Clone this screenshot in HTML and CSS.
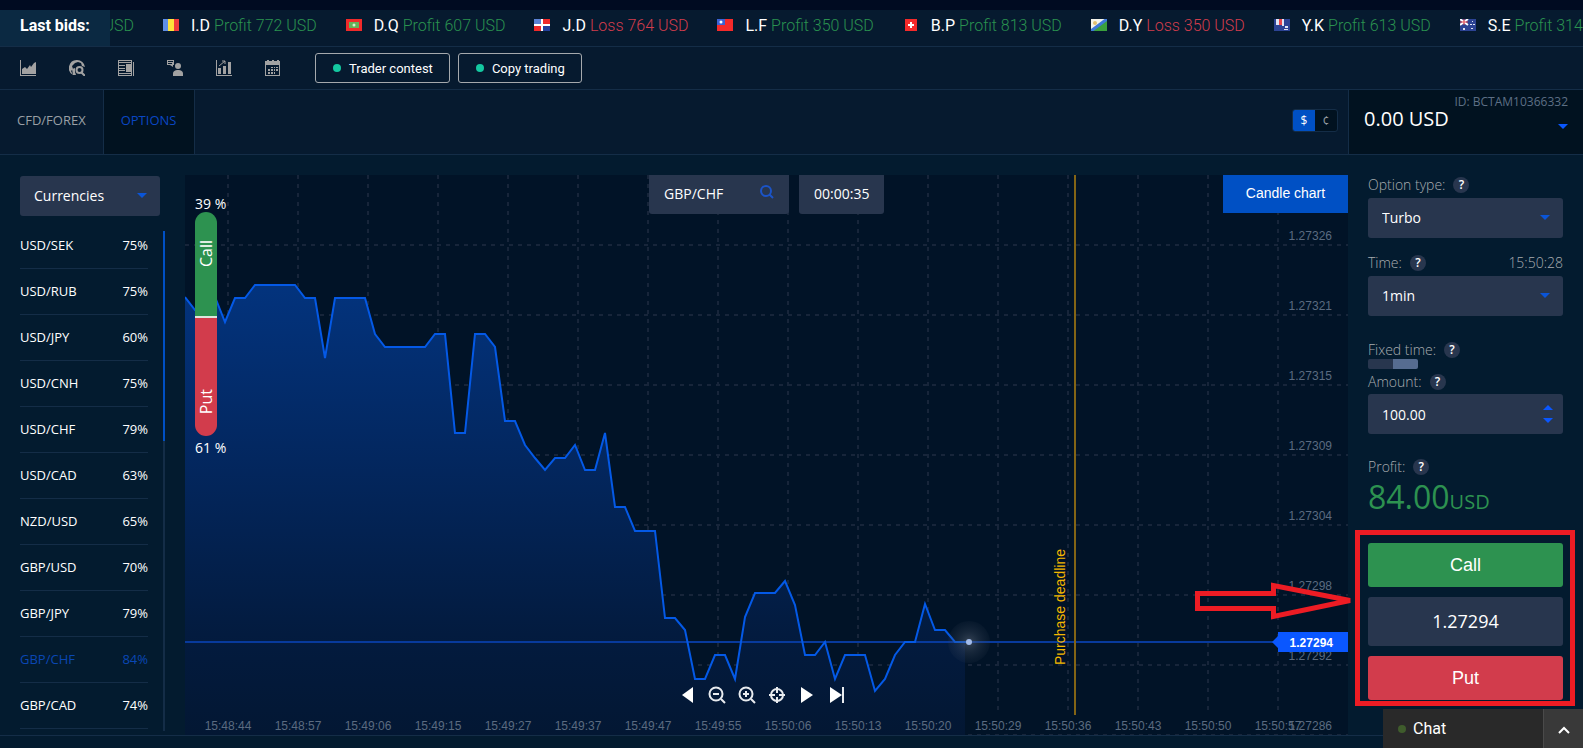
FILE: index.html
```html
<!DOCTYPE html>
<html lang="en">
<head>
<meta charset="utf-8">
<title>Options trading</title>
<link rel="stylesheet" href="styles.css">
</head>
<body>
<div class="page">
  <header>
    <div class="ticker">
      <strong class="ticker-title">Last bids:</strong>
      <ul class="ticker-list">
        <li class="bid bid-cut"><span class="profit">USD</span></li>
        <li class="bid"><svg class="flag" viewBox="0 0 16 12"><path fill="#5f8fe8" d="M0 0h5v12H0z"/><path fill="#ffe23a" d="M5 0h6v12H5z"/><path fill="#f03a3c" d="M11 0h5v12h-5z"/></svg><span>I.D <span class="profit">Profit 772 USD</span></span></li>
        <li class="bid"><svg class="flag" viewBox="0 0 16 12"><path fill="#f02a2a" d="M0 0h16v12H0z"/><path fill="#63b359" d="M3 3h10v6H3z"/><circle cx="8" cy="6" r="1.500" fill="#d5f0d0"/></svg><span>D.Q <span class="profit">Profit 607 USD</span></span></li>
        <li class="bid"><svg class="flag" viewBox="0 0 16 12"><path fill="#fff" d="M0 0h16v12H0z"/><path fill="#5b82d4" d="M0 0h7v5H0z"/><path fill="#24409c" d="M9 7h7v5H9z"/><path fill="#f02a2a" d="M9 0h7v5H9zM0 7h7v5H0z"/></svg><span>J.D <span class="loss">Loss 764 USD</span></span></li>
        <li class="bid"><svg class="flag" viewBox="0 0 16 12"><path fill="#f42a2a" d="M0 0h16v12H0z"/><path fill="#3b62d4" d="M0 0h8v6H0z"/><circle cx="4" cy="3" r="1.500" fill="#fff"/></svg><span>L.F <span class="profit">Profit 350 USD</span></span></li>
        <li class="bid"><svg class="flag" viewBox="0 0 16 12"><path fill="#f42a2a" d="M2 0h12v12H2z"/><path fill="#fff" d="M7 3h2v2h2v2H9v2H7V7H5V5h2z"/></svg><span>B.P <span class="profit">Profit 813 USD</span></span></li>
        <li class="bid"><svg class="flag" viewBox="0 0 16 12"><path fill="#f4f4ea" d="M0 0h16L0 12z"/><path fill="#3aa03c" d="M16 0v12H0z"/><path stroke="#3d78d8" stroke-width="3" d="M0 12L16 0"/><circle cx="4" cy="4" r="2" fill="#e0c070"/></svg><span>D.Y <span class="loss">Loss 350 USD</span></span></li>
        <li class="bid"><svg class="flag" viewBox="0 0 16 12"><path fill="#2c4394" d="M0 0h16v12H0z"/><path fill="#dfe4f4" d="M2 0h3v6H2zM8 0h2v7H8zM11 7h3v2h-3zM10 10h4v1h-4z"/><path fill="#e8464c" d="M5 0h3v6H5z"/></svg><span>Y.K <span class="profit">Profit 613 USD</span></span></li>
        <li class="bid"><svg class="flag" viewBox="0 0 16 12"><path fill="#2c4394" d="M0 0h16v12H0z"/><path stroke="#fff" stroke-width="2" d="M0 0l8 6M8 0L0 6"/><path stroke="#e8464c" d="M0 3h8M4 0v6"/><path fill="#dfe4f4" d="M3 9h2v2H3zM12 2h1v1h-1zM10 5h2v1h-2zM13 5h2v1h-2zM11 9h2v1h-2z"/></svg><span>S.E <span class="profit">Profit 314 USD</span></span></li>
      </ul>
    </div>

    <nav class="toolbar">
      <div class="tools">
        <a href="#" aria-label="Chart"><svg class="tool" viewBox="0 0 16 16"><path d="M0 0h1v15h15v1H0z"/><path d="M2 14V9l3-2 2 2 3-4 1 2 3-4 2-1v12z"/></svg></a>
        <a href="#" aria-label="World search"><svg class="tool" viewBox="0 0 16 16"><path d="M8 0a8 8 0 0 0-4 15L2 11l2-2-1-3 3-3 3-1 3 1 1 3 3 1A8 8 0 0 0 8 0z"/><path d="M3 9l3-1v4l1 3-3 0z"/><circle cx="10.500" cy="10" r="3" fill="none" stroke="currentColor" stroke-width="2"/><path stroke="currentColor" stroke-width="2" d="M12.500 12.500L16 16"/></svg></a>
        <a href="#" aria-label="News"><svg class="tool" viewBox="0 0 16 16"><path d="M0 0h14v1H0zM0 0h1v16H0zM13 0h1v16h-1zM0 15h14v1H0zM15 2h1v14h-1zM1 2h12v1H1zM1 5h6v1H1zM1 8h6v1H1zM1 10h6v1H1zM1 13h12v1H1zM8 4h5v8H8z"/></svg></a>
        <a href="#" aria-label="Consultant"><svg class="tool" viewBox="0 0 16 16"><path fill-rule="evenodd" d="M0 0h7v5H6v2L3 5H0zM1 1v1h5V1zM1 3v1h4V3z"/><circle cx="11" cy="6" r="3"/><path d="M6 16v-2c0-3 2-4 5-4s5 1 5 4v2z"/></svg></a>
        <a href="#" aria-label="Statistics"><svg class="tool" viewBox="0 0 16 16"><path d="M0 0h1v15h15v1H0zM2 8h3v6H2zM7 6h3v8H7zM12 2h3v12h-3z"/><path fill="none" stroke="currentColor" d="M3 6l6-5M6 1h3v3"/></svg></a>
        <a href="#" aria-label="Calendar"><svg class="tool" viewBox="0 0 16 16"><path fill-rule="evenodd" d="M0 1h2V0h2v1h3V0h2v1h3V0h2v1h1v15H0zM1 5v10h13V5z"/><path d="M6 7h2v1H6zM9 7h1v1H9zM11 7h2v1h-2zM3 9h2v2H3zM6 9h2v2H6zM9 9h1v2H9zM11 9h2v2h-2zM3 12h2v2H3zM6 12h2v2H6zM9 12h1v2H9z"/></svg></a>
      </div>
      <div class="promos">
        <button class="promo">Trader contest</button>
        <button class="promo">Copy trading</button>
      </div>
    </nav>

    <div class="account-bar">
      <nav class="tabs">
        <a class="tab" href="#">CFD/FOREX</a>
        <a class="tab tab-active" href="#">OPTIONS</a>
      </nav>
      <div class="unit">
        <button class="unit-btn unit-on">$</button>
        <button class="unit-btn">¢</button>
      </div>
      <div class="balance">
        <div class="account-id">ID: BCTAM10366332</div>
        <div class="balance-row"><span class="balance-sum">0.00 USD</span><button class="caret-btn" aria-label="Accounts"><span class="caret bright"></span></button></div>
      </div>
    </div>
  </header>

  <main class="main">
    <aside class="assets">
      <div class="field">
        <select class="control" aria-label="Asset group"><option>Currencies</option></select>
        <span class="caret on-field"></span>
      </div>
      <div class="asset-scroll">
        <ul class="asset-list">
          <li><span>USD/SEK</span><span>75%</span></li>
          <li><span>USD/RUB</span><span>75%</span></li>
          <li><span>USD/JPY</span><span>60%</span></li>
          <li><span>USD/CNH</span><span>75%</span></li>
          <li><span>USD/CHF</span><span>79%</span></li>
          <li><span>USD/CAD</span><span>63%</span></li>
          <li><span>NZD/USD</span><span>65%</span></li>
          <li><span>GBP/USD</span><span>70%</span></li>
          <li><span>GBP/JPY</span><span>79%</span></li>
          <li class="selected"><span>GBP/CHF</span><span>84%</span></li>
          <li><span>GBP/CAD</span><span>74%</span></li>
        </ul>
        <div class="track"><div class="thumb"></div></div>
      </div>
    </aside>

    <section class="chart">
      <svg class="plot" viewBox="0 0 1163 560" preserveAspectRatio="xMinYMin slice">
        <defs>
          <linearGradient id="area" gradientUnits="userSpaceOnUse" x1="0" y1="100" x2="0" y2="560">
            <stop offset="0" stop-color="#03347f"/>
            <stop offset="0.4" stop-color="#03275f"/>
            <stop offset="0.78" stop-color="#031b3f"/>
            <stop offset="1" stop-color="#031733"/>
          </linearGradient>
          <radialGradient id="glow">
            <stop offset="0" stop-color="#6b7686" stop-opacity="0.5"/>
            <stop offset="0.5" stop-color="#4a5668" stop-opacity="0.3"/>
            <stop offset="1" stop-color="#3a4658" stop-opacity="0.1"/>
          </radialGradient>
        </defs>
        <path class="grid" d="M43 0V535M113 0V535M183 0V535M253 0V535M323 0V535M393 0V535M463 0V535M533 0V535M603 0V535M673 0V535M743 0V535M813 0V535M883 0V535M953 0V535M1023 0V535M1093 0V535"/>
        <path class="grid" d="M0 70H1163M0 140H1163M0 210H1163M0 280H1163M0 350H1163M0 420H1163M0 490H1163M0 560H1163"/>
        <path fill="url(#area)" d="M0 122L10 135L20 135L30 122L40 147L50 123L60 123L70 110L110 110L120 123L130 123L140 183L150 123L180 123L190 159L200 172L240 172L250 159L260 159L270 258L280 258L290 159L300 159L310 172L320 246L330 246L340 270L350 283L360 295L370 283L380 283L390 270L400 295L410 295L420 258L430 332L440 332L450 356L470 356L480 443L490 443L500 455L510 504L520 504L530 480L540 480L550 504L560 442L570 418L590 418L600 406L610 430L620 480L630 480L640 467L650 504L660 480L680 480L690 516L700 504L710 480L720 467L730 467L740 429L750 455L760 455L770 467H780V560H0z"/>
        <path class="price-line" d="M0 467H1088"/>
        <path class="series" d="M0 122L10 135L20 135L30 122L40 147L50 123L60 123L70 110L110 110L120 123L130 123L140 183L150 123L180 123L190 159L200 172L240 172L250 159L260 159L270 258L280 258L290 159L300 159L310 172L320 246L330 246L340 270L350 283L360 295L370 283L380 283L390 270L400 295L410 295L420 258L430 332L440 332L450 356L470 356L480 443L490 443L500 455L510 504L520 504L530 480L540 480L550 504L560 442L570 418L590 418L600 406L610 430L620 480L630 480L640 467L650 504L660 480L680 480L690 516L700 504L710 480L720 467L730 467L740 429L750 455L760 455L770 467H784"/>
        <circle cx="784" cy="467" r="21" fill="url(#glow)"/>
        <circle cx="784" cy="467" r="3" fill="#a4bce8"/>
        <path class="deadline-line" d="M890 0V540"/>
        <text class="deadline" transform="translate(880 490) rotate(-90)">Purchase deadline</text>
        <g class="axis" text-anchor="middle">
          <text x="43" y="555">15:48:44</text><text x="113" y="555">15:48:57</text><text x="183" y="555">15:49:06</text><text x="253" y="555">15:49:15</text>
          <text x="323" y="555">15:49:27</text><text x="393" y="555">15:49:37</text><text x="463" y="555">15:49:47</text><text x="533" y="555">15:49:55</text>
          <text x="603" y="555">15:50:06</text><text x="673" y="555">15:50:13</text><text x="743" y="555">15:50:20</text><text x="813" y="555">15:50:29</text>
          <text x="883" y="555">15:50:36</text><text x="953" y="555">15:50:43</text><text x="1023" y="555">15:50:50</text><text x="1093" y="555">15:50:57</text>
        </g>
        <g class="axis" text-anchor="end">
          <text x="1147" y="65">1.27326</text><text x="1147" y="135">1.27321</text><text x="1147" y="205">1.27315</text><text x="1147" y="275">1.27309</text>
          <text x="1147" y="345">1.27304</text><text x="1147" y="415">1.27298</text><text x="1147" y="485">1.27292</text><text x="1147" y="555">1.27286</text>
        </g>
        <path fill="#0a57ff" d="M1087 467l6-6v-4h70v20h-70v-4z"/>
        <text class="price-tag" x="1148" y="472" text-anchor="end">1.27294</text>
      </svg>
      <div class="chart-top">
        <div class="asset-pick">
          <button class="pill pill-asset">GBP/CHF
            <svg class="loupe" viewBox="0 0 14 14"><circle cx="6" cy="6" r="5"/><path d="M9.500 9.500L13 13"/></svg>
          </button>
          <div class="pill">00:00:35</div>
        </div>
        <button class="candle">Candle chart</button>
      </div>
      <div class="mood">
        <span>39 %</span>
        <div class="mood-bar">
          <div class="mood-call"><span>Call</span></div>
          <div class="mood-put"><span>Put</span></div>
        </div>
        <span>61 %</span>
      </div>
      <div class="controls">
        <button aria-label="Back"><svg viewBox="0 0 20 20"><path class="solid" d="M16 2v16L5 10z"/></svg></button>
        <button aria-label="Zoom out"><svg viewBox="0 0 20 20"><circle cx="9" cy="9" r="6.500"/><path d="M14 14l4 4M6 9h6"/></svg></button>
        <button aria-label="Zoom in"><svg viewBox="0 0 20 20"><circle cx="9" cy="9" r="6.500"/><path d="M14 14l4 4M6 9h6M9 6v6"/></svg></button>
        <button aria-label="Center"><svg viewBox="0 0 20 20"><circle cx="10" cy="10" r="6"/><path d="M2 10h6M12 10h6M10 2v6M10 12v6"/></svg></button>
        <button aria-label="Forward"><svg viewBox="0 0 20 20"><path class="solid" d="M4 2v16l12-8z"/></svg></button>
        <button aria-label="To the end"><svg viewBox="0 0 20 20"><path class="solid" d="M3 2v16l12-8z"/><path d="M16 2v16"/></svg></button>
      </div>
    </section>

    <form class="order">
      <label class="label" for="type">Option type: <span class="help">?</span></label>
      <div class="field">
        <select class="control" id="type"><option>Turbo</option></select>
        <span class="caret on-field"></span>
      </div>
      <div class="label-row">
        <label class="label" for="time">Time: <span class="help">?</span></label>
        <span class="clock">15:50:28</span>
      </div>
      <div class="field">
        <select class="control" id="time"><option>1min</option></select>
        <span class="caret on-field"></span>
      </div>
      <label class="label label-fixed" for="fixed">Fixed time: <span class="help">?</span></label>
      <input class="switch" type="checkbox" id="fixed" checked>
      <label class="label label-amount" for="amount">Amount: <span class="help">?</span></label>
      <div class="field">
        <input class="control" type="text" id="amount" value="100.00">
        <span class="spin"><span class="caret up"></span><span class="caret bright"></span></span>
      </div>
      <div class="label label-profit">Profit: <span class="help">?</span></div>
      <div class="payout">84.00<small>USD</small></div>
      <div class="actions">
        <svg class="arrow" viewBox="0 0 160 40"><path d="M2.500 12.500H78.500V4.500L155 19.500L78.500 35.500V27.500H2.500z"/></svg>
        <button class="action call" type="button">Call</button>
        <output class="action rate">1.27294</output>
        <button class="action put" type="button">Put</button>
      </div>
    </form>
  </main>

  <div class="chat">
    <button class="chat-open"><span class="chat-dot"></span>Chat</button>
    <button class="chat-up" aria-label="Expand chat"><svg viewBox="0 0 12 8"><path d="M1 7l5-5 5 5"/></svg></button>
  </div>
</div>
</body>
</html>
```
FILE: styles.css
```css
* { box-sizing: border-box; }

body {
  margin: 0;
  background: #031b2f;
  color: #fff;
  font: 14px/20px "Open Sans", sans-serif;
}

ul { list-style: none; margin: 0; padding: 0; }
a { color: inherit; text-decoration: none; }
button { border: 0; padding: 0; background: none; color: inherit; font-family: inherit; cursor: pointer; }

.page { position: relative; min-height: 100vh; overflow: hidden; }

header { background: #061a2f; border-top: 10px solid #000b21; }

/* Ticker */
.ticker { display: flex; height: 37px; border-bottom: 1px solid #142d47; font: 16px/32px Roboto, sans-serif; }
.ticker-title { flex: none; width: 110px; padding-left: 20px; background: #0b2942; font-weight: 700; }
.ticker-list { flex: 1; display: flex; gap: 29px; overflow: hidden; white-space: nowrap; }
.bid { flex: none; display: flex; align-items: flex-start; gap: 12px; }
.bid-cut { width: 24px; justify-content: flex-end; overflow: hidden; }
.flag { width: 16px; height: 12px; margin-top: 9px; }
.profit, .loss { font-weight: 300; }
.profit { color: #2a9250; }
.loss { color: #d33d4d; }

/* Toolbar */
.toolbar { display: flex; align-items: center; height: 43px; padding-left: 20px; gap: 34px; border-bottom: 1px solid #142d47; }
.tools { display: flex; gap: 33px; color: #a2a2a2; }
.tool { display: block; width: 16px; height: 16px; fill: currentColor; }
.promos { display: flex; gap: 8px; }
.promo { display: flex; align-items: center; gap: 8px; height: 30px; padding: 0 16px 0 17px; border: 1px solid #a5a9ad; border-radius: 3px; font: 13px Roboto, sans-serif; }
.promo::before { content: ""; width: 8px; height: 8px; border-radius: 50%; background: #14c8a0; }

/* Account bar */
.account-bar { display: flex; align-items: stretch; height: 65px; border-bottom: 1px solid #142d47; }
.tabs { display: flex; flex: 1; }
.tab { display: flex; align-items: center; padding: 0 17px 4px; border-right: 1px solid #142d47; font-size: 13px; color: #9aa0a6; }
.tab-active { padding-right: 18px; background: #011220; color: #0a47c4; }
.unit { display: flex; height: 23px; margin: 19px 10px 0 0; border: 1px solid #142d47; border-radius: 3px; background: #011220; }
.unit-btn { width: 22px; height: 21px; font-size: 12px; color: #9aa0a6; }
.unit-on { background: #0050c4; color: #fff; border-radius: 2px 0 0 2px; }
.balance { width: 235px; padding: 3px 15px 0; border-left: 1px solid #142d47; background: #011220; }
.account-id { text-align: right; font-size: 12px; line-height: 18px; color: #5d6f85; }
.balance-row { display: flex; justify-content: space-between; align-items: flex-end; height: 18px; }
.balance-sum { align-self: flex-start; font-size: 20px; line-height: 16px; }
.caret-btn { line-height: 0; }

.caret { display: inline-block; width: 10px; height: 5px; background: #0a55d8; clip-path: polygon(0 0, 100% 0, 50% 100%); }
.bright, .up { background: #0a57ff; }
.up { clip-path: polygon(50% 0, 100% 100%, 0 100%); }

/* Main area */
.main { display: flex; border-bottom: 1px solid #142d47; padding-top: 20px; }

.field { position: relative; }
.control { display: block; width: 100%; height: 40px; margin: 0; padding: 0 14px 2px; border: 0; border-radius: 3px; appearance: none; background: #28364e; color: #fff; font: 14px "Open Sans", sans-serif; }
input.control { padding-bottom: 0; }
.on-field { position: absolute; right: 13px; top: 17px; }

.assets { flex: none; width: 185px; padding: 1px 20px 0; }
.assets .field { width: 140px; }
.asset-scroll { display: flex; margin-top: 15px; width: 145px; }
.asset-list { flex: 1; margin-right: 15px; font-size: 13px; }
.asset-list li { display: flex; justify-content: space-between; height: 46px; padding-top: 13px; border-bottom: 1px solid #142d47; line-height: 18px; }
.asset-list li:first-child { height: 38px; padding-top: 5px; }
.asset-list .selected { color: #0a47b4; }
.track { width: 2px; height: 500px; background: #142d47; }
.thumb { height: 42%; background: #0050c4; }

/* Chart */
.chart { position: relative; flex: 1; min-width: 0; height: 560px; background: #011327; }
.plot { display: block; width: 100%; height: 100%; }
.grid { fill: none; stroke: #17253a; stroke-width: 2; stroke-dasharray: 4 5; }
.series { fill: none; stroke: #0459e6; stroke-width: 2; }
.price-line { stroke: #083a9c; stroke-width: 2; }
.deadline-line { stroke: #836415; stroke-width: 2; }
.deadline { fill: #f5b800; font: 14px "Liberation Sans", sans-serif; }
.axis { fill: #5b6b80; font: 12px "Liberation Sans", sans-serif; }
.price-tag { fill: #fff; font: bold 12px "Liberation Sans", sans-serif; }

.chart-top { position: absolute; inset: 0 0 auto; display: flex; justify-content: flex-end; align-items: flex-start; }
.asset-pick { position: absolute; left: 39.9%; display: flex; gap: 10px; }
.pill { display: flex; align-items: center; height: 39px; padding: 0 15px 2px; border-radius: 0 0 3px 3px; background: #28364e; font-size: 14px; }
.pill-asset { justify-content: space-between; width: 140px; }
.loupe { width: 14px; height: 14px; margin-bottom: 4px; fill: none; stroke: #1b54c8; stroke-width: 2; }
.candle { width: 125px; height: 38px; padding-bottom: 2px; background: #0050c4; font: 14px "Liberation Sans", sans-serif; }

.mood { position: absolute; left: 10px; top: 20px; white-space: nowrap; }
.mood > span { display: block; line-height: 17px; }
.mood-bar { width: 22px; margin-bottom: 3px; border-radius: 11px; overflow: hidden; font-size: 16px; line-height: 22px; }
.mood-call, .mood-put { display: flex; align-items: center; }
.mood-call { height: 106px; justify-content: center; background: #2d9250; border-bottom: 2px solid #dde6dd; }
.mood-call span, .mood-put span { writing-mode: vertical-rl; transform: rotate(180deg); }
.mood-call span { margin-top: -20px; }
.mood-put { height: 118px; align-items: flex-end; padding-bottom: 22px; background: #d23c4c; }

.controls { position: absolute; left: 492px; bottom: 30px; display: flex; gap: 10px; }
.controls svg { display: block; width: 20px; height: 20px; fill: none; stroke: #e8ebef; stroke-width: 2; }
.controls .solid { fill: #fff; stroke: none; }

/* Order form */
.order { flex: none; width: 235px; padding: 0 20px; }
.label { display: flex; align-items: center; gap: 8px; height: 20px; font-size: 14px; font-weight: 300; color: #a8acb0; }
.help { width: 16px; height: 16px; border-radius: 50%; background: #28364e; color: #fff; font-size: 12px; line-height: 16px; font-weight: 600; text-align: center; }
.order > .label { margin-bottom: 3px; }
.label-row { display: flex; justify-content: space-between; margin: 15px 0 3px; }
.clock { color: #a8acb0; font-weight: 300; }
.order > .label-fixed { margin: 24px 0 -1px; }
.switch { display: block; width: 50px; height: 10px; margin: 0; appearance: none; border-radius: 2px; background: linear-gradient(90deg, #28364e 50%, #566c90 50%); }
.order > .label-amount { margin-top: 3px; margin-bottom: 2px; }
.spin { position: absolute; right: 10px; top: 11px; display: grid; gap: 8px; }
.order > .label-profit { margin-top: 23px; margin-bottom: 0; }
.payout { color: #2d9250; font-size: 32px; line-height: 40px; font-weight: 500; }
.payout small { font-size: 20px; }

.actions { position: relative; display: grid; gap: 10px; margin: 8px -12px 0 -13px; padding: 8px 7px 1px 8px; border: 5px solid #ed1c24; }
.arrow { position: absolute; right: calc(100% + 5px); top: 46px; width: 160px; height: 40px; fill: none; stroke: #ed1c24; stroke-width: 5; }
.action { display: block; width: 100%; height: 44px; border-radius: 3px; font: 18px/44px "Liberation Sans", sans-serif; text-align: center; }
.call { background: #2d9250; }
.put { background: #d23c4c; }
.rate { height: 49px; background: #28364e; font: 18px/49px "Open Sans", sans-serif; }

/* Chat */
.chat { position: absolute; right: 0; bottom: 0; display: flex; width: 200px; height: 39px; background: #292929; }
.chat-open { flex: 1; display: flex; align-items: center; gap: 7px; padding-left: 15px; font: 16px Roboto, sans-serif; }
.chat-dot { width: 8px; height: 8px; border-radius: 50%; background: #3f5c2c; }
.chat-up { width: 40px; border-left: 1px solid #4a4a4a; background: #393939; }
.chat-up svg { width: 12px; height: 8px; fill: none; stroke: #fff; stroke-width: 2; }
```
